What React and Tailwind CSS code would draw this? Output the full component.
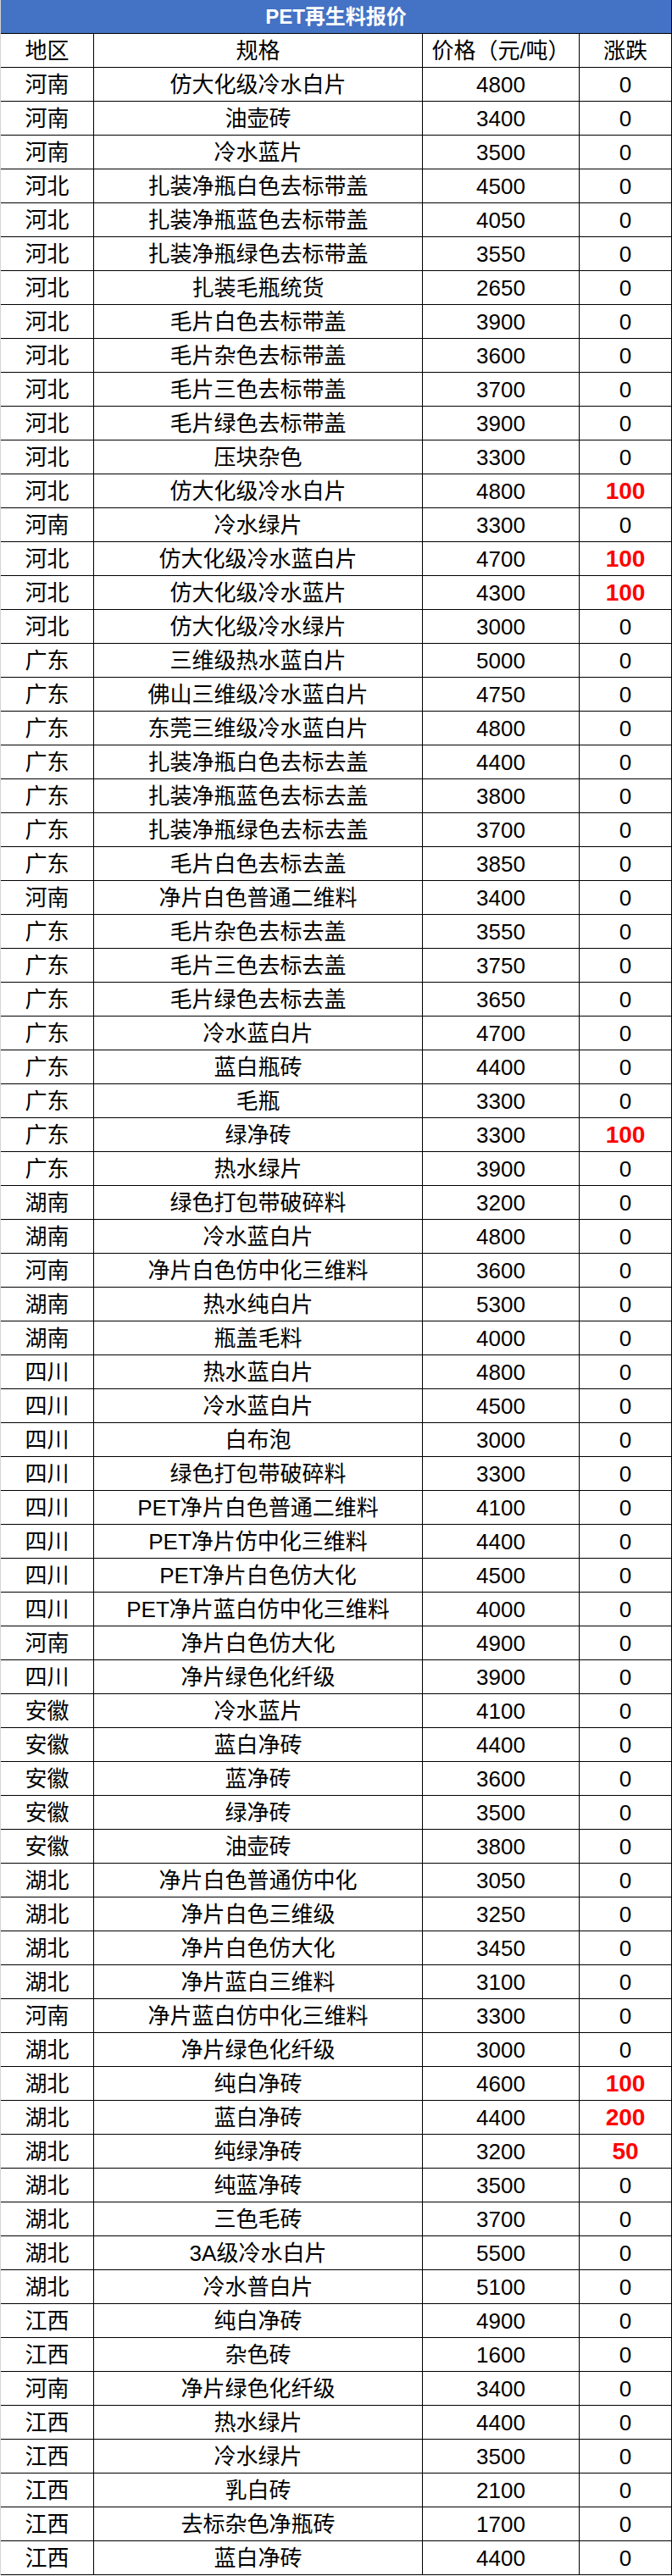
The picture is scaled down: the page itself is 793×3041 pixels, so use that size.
import React from "react";

const ROWS = [
  ["河南", "仿大化级冷水白片", "4800", "0"],
  ["河南", "油壶砖", "3400", "0"],
  ["河南", "冷水蓝片", "3500", "0"],
  ["河北", "扎装净瓶白色去标带盖", "4500", "0"],
  ["河北", "扎装净瓶蓝色去标带盖", "4050", "0"],
  ["河北", "扎装净瓶绿色去标带盖", "3550", "0"],
  ["河北", "扎装毛瓶统货", "2650", "0"],
  ["河北", "毛片白色去标带盖", "3900", "0"],
  ["河北", "毛片杂色去标带盖", "3600", "0"],
  ["河北", "毛片三色去标带盖", "3700", "0"],
  ["河北", "毛片绿色去标带盖", "3900", "0"],
  ["河北", "压块杂色", "3300", "0"],
  ["河北", "仿大化级冷水白片", "4800", "100"],
  ["河南", "冷水绿片", "3300", "0"],
  ["河北", "仿大化级冷水蓝白片", "4700", "100"],
  ["河北", "仿大化级冷水蓝片", "4300", "100"],
  ["河北", "仿大化级冷水绿片", "3000", "0"],
  ["广东", "三维级热水蓝白片", "5000", "0"],
  ["广东", "佛山三维级冷水蓝白片", "4750", "0"],
  ["广东", "东莞三维级冷水蓝白片", "4800", "0"],
  ["广东", "扎装净瓶白色去标去盖", "4400", "0"],
  ["广东", "扎装净瓶蓝色去标去盖", "3800", "0"],
  ["广东", "扎装净瓶绿色去标去盖", "3700", "0"],
  ["广东", "毛片白色去标去盖", "3850", "0"],
  ["河南", "净片白色普通二维料", "3400", "0"],
  ["广东", "毛片杂色去标去盖", "3550", "0"],
  ["广东", "毛片三色去标去盖", "3750", "0"],
  ["广东", "毛片绿色去标去盖", "3650", "0"],
  ["广东", "冷水蓝白片", "4700", "0"],
  ["广东", "蓝白瓶砖", "4400", "0"],
  ["广东", "毛瓶", "3300", "0"],
  ["广东", "绿净砖", "3300", "100"],
  ["广东", "热水绿片", "3900", "0"],
  ["湖南", "绿色打包带破碎料", "3200", "0"],
  ["湖南", "冷水蓝白片", "4800", "0"],
  ["河南", "净片白色仿中化三维料", "3600", "0"],
  ["湖南", "热水纯白片", "5300", "0"],
  ["湖南", "瓶盖毛料", "4000", "0"],
  ["四川", "热水蓝白片", "4800", "0"],
  ["四川", "冷水蓝白片", "4500", "0"],
  ["四川", "白布泡", "3000", "0"],
  ["四川", "绿色打包带破碎料", "3300", "0"],
  ["四川", "PET净片白色普通二维料", "4100", "0"],
  ["四川", "PET净片仿中化三维料", "4400", "0"],
  ["四川", "PET净片白色仿大化", "4500", "0"],
  ["四川", "PET净片蓝白仿中化三维料", "4000", "0"],
  ["河南", "净片白色仿大化", "4900", "0"],
  ["四川", "净片绿色化纤级", "3900", "0"],
  ["安徽", "冷水蓝片", "4100", "0"],
  ["安徽", "蓝白净砖", "4400", "0"],
  ["安徽", "蓝净砖", "3600", "0"],
  ["安徽", "绿净砖", "3500", "0"],
  ["安徽", "油壶砖", "3800", "0"],
  ["湖北", "净片白色普通仿中化", "3050", "0"],
  ["湖北", "净片白色三维级", "3250", "0"],
  ["湖北", "净片白色仿大化", "3450", "0"],
  ["湖北", "净片蓝白三维料", "3100", "0"],
  ["河南", "净片蓝白仿中化三维料", "3300", "0"],
  ["湖北", "净片绿色化纤级", "3000", "0"],
  ["湖北", "纯白净砖", "4600", "100"],
  ["湖北", "蓝白净砖", "4400", "200"],
  ["湖北", "纯绿净砖", "3200", "50"],
  ["湖北", "纯蓝净砖", "3500", "0"],
  ["湖北", "三色毛砖", "3700", "0"],
  ["湖北", "3A级冷水白片", "5500", "0"],
  ["湖北", "冷水普白片", "5100", "0"],
  ["江西", "纯白净砖", "4900", "0"],
  ["江西", "杂色砖", "1600", "0"],
  ["河南", "净片绿色化纤级", "3400", "0"],
  ["江西", "热水绿片", "4400", "0"],
  ["江西", "冷水绿片", "3500", "0"],
  ["江西", "乳白砖", "2100", "0"],
  ["江西", "去标杂色净瓶砖", "1700", "0"],
  ["江西", "蓝白净砖", "4400", "0"],
];

const cell =
  "flex items-center justify-center h-full border-r border-black whitespace-nowrap";

const Row = ({ cells, head }) => (
  <div className="grid grid-cols-[110px_388px_185px_109px] h-[40px] border-b border-black">
    <div className={cell}>{cells[0]}</div>
    <div className={cell}>{cells[1]}</div>
    <div className={cell}>{cells[2]}</div>
    <div
      className={`${cell} ${
        !head && cells[3] !== "0" ? "text-[#ff0000] font-bold text-[28px]" : ""
      }`}
    >
      {cells[3]}
    </div>
  </div>
);

export default function App() {
  return (
    <div
      className="w-[793px] bg-white text-black text-[26px] leading-none border-l border-[#d4d4d4]"
      style={{ fontFamily: '"Liberation Sans", "Noto Sans CJK SC", sans-serif' }}
    >
      <div className="h-[40px] flex items-center justify-center bg-[#4472c4] text-white font-bold text-[24px] border-b border-r border-black">
        PET再生料报价
      </div>
      <Row head cells={["地区", "规格", "价格（元/吨）", "涨跌"]} />
      {ROWS.map((r, i) => (
        <Row key={i} cells={r} />
      ))}
    </div>
  );
}
